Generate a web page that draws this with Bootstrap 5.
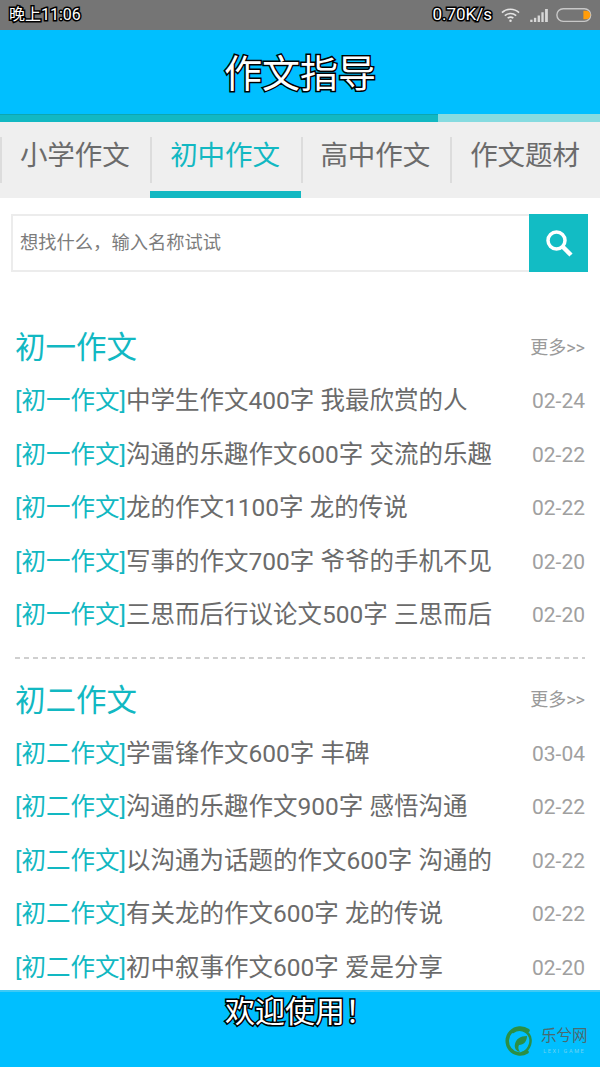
<!DOCTYPE html>
<html lang="zh-CN">
<head>
<meta charset="utf-8">
<title>作文指导</title>
<link href="https://cdn.jsdelivr.net/npm/bootstrap@5.3.0/dist/css/bootstrap.min.css" rel="stylesheet">
<style>
html,body{height:1067px;overflow:hidden}
body{font-family:Roboto,"Noto Sans CJK SC",sans-serif;background:#fff;color:#666}
.screen{height:1067px;width:600px;position:relative;overflow:hidden}
.status-strip{height:30px;background:#757575;padding:0 8px 0 9px;color:#fff}
.status-time{font-size:16px}
.speed{font-size:17px;margin-right:9px}
.wifi-glyph{margin-right:10px}
.signal-glyph{margin-right:7px}
.outlined{color:#fff;-webkit-text-stroke:3px #000;paint-order:stroke fill;font-weight:400}
.app-head{height:84px;background:#00bfff;padding-top:3px}
.app-title{font-size:38px;line-height:1;margin:0}
.progress-strip{height:8px;background:#86dbe0}
.progress-strip>div{width:438px;background:#12b8c2;border-top:1px solid #0da6b0}
.tab-strip{height:76px;background:#efefef}
.tab-item{width:150px;height:76px;font-size:27.500px;color:#6b6b6b;text-decoration:none;position:relative;padding-top:13px;text-align:center;border-bottom:7px solid transparent}
.tab-item::before{content:"";position:absolute;left:0;top:15px;height:46px;width:2px;background:#dcdcdc}
.tab-item.on{color:#12b8c2;border-bottom-color:#12b8c2}
.tab-item.on{width:151px}
.search-row{margin:16px 12px 0 11px;height:58px;border:2px solid #ececec;border-right:0}
.search-hint{font-size:18.300px;color:#777;padding:0 0 0 7px;border:0;background:none;outline:0;min-width:0}
.search-hint::placeholder{color:#7c7c7c;opacity:1}
.search-go{width:59px;height:58px;margin:-2px 0;background:#12bcc4;border:0;border-radius:0;padding:0}
.lists{padding:0 15px 0 15px;margin-top:51px}
.sec-head{height:50px;margin-bottom:2px}
.sec-title{font-size:30.500px;color:#12b8c2;margin:0;line-height:50px;font-weight:400}
.more-link{font-size:18px;color:#9a9a9a;text-decoration:none;margin-bottom:2px}
.art{height:53.500px;font-size:24.500px;color:#6b6b6b}
.art-name{white-space:nowrap;overflow:hidden}
.art-name b{font-weight:400;color:#12b8c2}
.art-date{font-size:21px;color:#a0a0a0}
.dash{height:2px;margin-top:14px;margin-bottom:17px;background:repeating-linear-gradient(90deg,#cfcfcf 0 5px,transparent 5px 9px)}
.foot{position:absolute;left:0;right:0;bottom:0;height:77px;background:#00bfff;border-top:2px solid #3ec9f5;text-align:center}
.foot-msg{font-size:30px;line-height:40px}
.mark-box{position:absolute;left:504px;top:34px;gap:7px}
.mark-cn{font-size:15.500px;line-height:17px;color:#4a6a70}
.mark-en{font-size:5.500px;line-height:6px;letter-spacing:1.600px;color:#6fd3f2;margin-top:3px;white-space:nowrap}
</style>
</head>
<body>
<div class="screen">
  <div class="status-strip d-flex align-items-center justify-content-between">
    <span class="status-time outlined">晚上11:06</span>
    <div class="d-flex align-items-center">
      <span class="speed outlined">0.70K/s</span>
      <svg class="wifi-glyph" width="19" height="16" viewBox="0 0 20 16" fill="none" stroke="#e4e4e4" stroke-width="1.700"><path d="M1 5.500C6 .8 14 .8 19 5.500"/><path d="M4 8.600c3.500-3 8.500-3 12 0"/><path d="M7 11.400c1.800-1.400 4.200-1.400 6 0"/><circle cx="10" cy="14" r="1.300" fill="#e4e4e4" stroke="none"/></svg>
      <svg class="signal-glyph" width="19" height="13" viewBox="0 0 20 14" fill="#d8d8d8"><rect x="0" y="11.500" width="2.500" height="2.500"/><rect x="4" y="9.500" width="2.500" height="4.500"/><rect x="8" y="7" width="2.500" height="7"/><rect x="12" y="3.500" width="2.500" height="10.500"/><rect x="16" y="0" width="3" height="14"/></svg>
      <svg width="36" height="15" viewBox="0 0 38 16"><rect x=".75" y=".75" width="36" height="13.500" rx="6.700" fill="none" stroke="#c8c8c8" stroke-width="1.500"/><path d="M29 3h3a4.500 4.500 0 0 1 0 9h-3z" fill="#ff9d0a"/></svg>
    </div>
  </div>
  <header class="app-head d-flex align-items-center justify-content-center"><h1 class="app-title outlined">作文指导</h1></header>
  <div class="progress-strip d-flex"><div></div></div>
  <nav class="tab-strip d-flex">
    <a class="tab-item" href="#">小学作文</a>
    <a class="tab-item on" href="#">初中作文</a>
    <a class="tab-item" href="#">高中作文</a>
    <a class="tab-item" href="#">作文题材</a>
  </nav>
  <div class="search-row d-flex align-items-stretch">
    <input class="search-hint flex-grow-1" type="text" placeholder="想找什么，输入名称试试">
    <button class="search-go btn d-flex align-items-center justify-content-center" type="button" aria-label="搜索">
      <svg width="30" height="30" viewBox="0 0 30 30" fill="none" stroke="#fff"><circle cx="12.500" cy="12.500" r="8.500" stroke-width="3.500"/><path d="M19 19l8 8" stroke-width="4.500"/></svg>
    </button>
  </div>
  <main class="lists">
    <section>
      <div class="sec-head d-flex align-items-center justify-content-between"><h2 class="sec-title">初一作文</h2><a class="more-link" href="#">更多&gt;&gt;</a></div>
      <div class="art d-flex align-items-center justify-content-between"><span class="art-name"><b>[初一作文]</b>中学生作文400字 我最欣赏的人</span><span class="art-date">02-24</span></div>
      <div class="art d-flex align-items-center justify-content-between"><span class="art-name"><b>[初一作文]</b>沟通的乐趣作文600字 交流的乐趣</span><span class="art-date">02-22</span></div>
      <div class="art d-flex align-items-center justify-content-between"><span class="art-name"><b>[初一作文]</b>龙的作文1100字 龙的传说</span><span class="art-date">02-22</span></div>
      <div class="art d-flex align-items-center justify-content-between"><span class="art-name"><b>[初一作文]</b>写事的作文700字 爷爷的手机不见</span><span class="art-date">02-20</span></div>
      <div class="art d-flex align-items-center justify-content-between"><span class="art-name"><b>[初一作文]</b>三思而后行议论文500字 三思而后</span><span class="art-date">02-20</span></div>
    </section>
    <div class="dash"></div>
    <section>
      <div class="sec-head d-flex align-items-center justify-content-between"><h2 class="sec-title">初二作文</h2><a class="more-link" href="#">更多&gt;&gt;</a></div>
      <div class="art d-flex align-items-center justify-content-between"><span class="art-name"><b>[初二作文]</b>学雷锋作文600字 丰碑</span><span class="art-date">03-04</span></div>
      <div class="art d-flex align-items-center justify-content-between"><span class="art-name"><b>[初二作文]</b>沟通的乐趣作文900字 感悟沟通</span><span class="art-date">02-22</span></div>
      <div class="art d-flex align-items-center justify-content-between"><span class="art-name"><b>[初二作文]</b>以沟通为话题的作文600字 沟通的</span><span class="art-date">02-22</span></div>
      <div class="art d-flex align-items-center justify-content-between"><span class="art-name"><b>[初二作文]</b>有关龙的作文600字 龙的传说</span><span class="art-date">02-22</span></div>
      <div class="art d-flex align-items-center justify-content-between"><span class="art-name"><b>[初二作文]</b>初中叙事作文600字 爱是分享</span><span class="art-date">02-20</span></div>
    </section>
  </main>
  <footer class="foot">
    <div class="foot-msg outlined">欢迎使用！</div>
    <div class="mark-box d-flex align-items-center">
      <svg width="30" height="30" viewBox="0 0 30 30" fill="none"><path d="M24 4.500A13 13 0 1 0 23 26" stroke="#2b8f45" stroke-width="3.500" stroke-linecap="round"/><path d="M9 6A11 11 0 0 1 26 11c2 7-2 14-8 16" stroke="#2b8f45" stroke-width="2.500" stroke-linecap="round"/><path d="M23 10c-7 0-11 3-12 8-1 4 1 7 5 8-2-3-2-5-1-7 5 0 8-4 8-9z" fill="#2b8f45"/></svg>
      <div>
        <div class="mark-cn">乐兮网</div>
        <div class="mark-en">LEXI GAME</div>
      </div>
    </div>
  </footer>
</div>
<script src="https://cdn.jsdelivr.net/npm/bootstrap@5.3.0/dist/js/bootstrap.bundle.min.js"></script>
</body>
</html>
